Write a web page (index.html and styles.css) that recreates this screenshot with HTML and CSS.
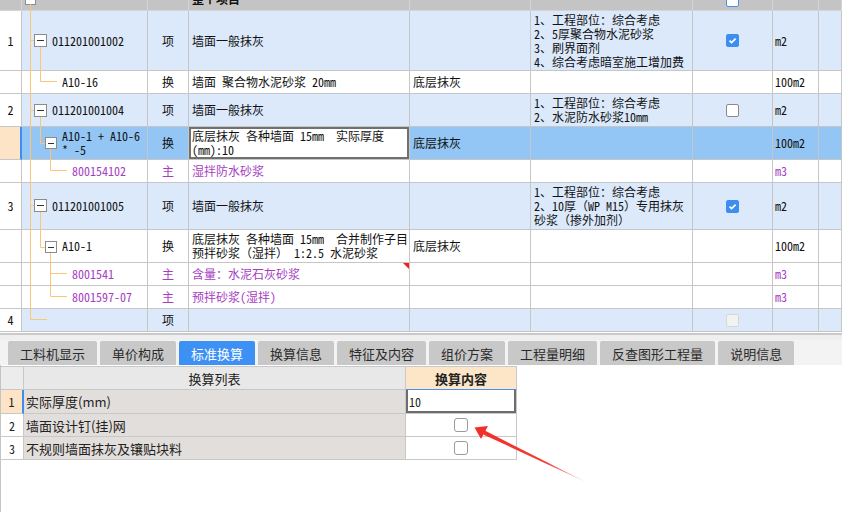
FILE: index.html
```html
<!DOCTYPE html>
<html lang="zh">
<head>
<meta charset="utf-8">
<title>标准换算</title>
<link rel="stylesheet" href="styles.css">
</head>
<body>
<div class="app">
  <div class="grid-view">
    <div class="grid-body">
      <div class="row head h24">
        <div class="cell num"></div>
        <div class="cell tree"><span class="hbox"></span></div>
        <div class="cell"></div>
        <div class="cell">整个项目</div>
        <div class="cell"></div>
        <div class="cell"></div>
        <div class="cell chk"><span class="cb hdr"></span></div>
        <div class="cell"></div>
        <div class="cell"></div>
      </div>

      <div class="row item h60">
        <div class="cell num">1</div>
        <div class="cell tree l1">011201001002</div>
        <div class="cell type">项</div>
        <div class="cell">墙面一般抹灰</div>
        <div class="cell"></div>
        <div class="cell desc">1、工程部位：综合考虑<br>2、5厚聚合物水泥砂浆<br>3、刷界面剂<br>4、综合考虑暗室施工增加费</div>
        <div class="cell chk"><span class="cb on"><svg viewBox="0 0 13 13"><path d="M3 6.6 L5.4 9 L10.2 4.2" fill="none" stroke="#fff" stroke-width="2"/></svg></span></div>
        <div class="cell unit">m2</div>
        <div class="cell"></div>
      </div>

      <div class="row sub h23">
        <div class="cell num"></div>
        <div class="cell tree l2">A10-16</div>
        <div class="cell type">换</div>
        <div class="cell">墙面 聚合物水泥砂浆 20mm</div>
        <div class="cell">底层抹灰</div>
        <div class="cell"></div>
        <div class="cell"></div>
        <div class="cell unit">100m2</div>
        <div class="cell"></div>
      </div>

      <div class="row item h33">
        <div class="cell num">2</div>
        <div class="cell tree l1">011201001004</div>
        <div class="cell type">项</div>
        <div class="cell">墙面一般抹灰</div>
        <div class="cell"></div>
        <div class="cell desc">1、工程部位：综合考虑<br>2、水泥防水砂浆10mm</div>
        <div class="cell chk"><span class="cb"></span></div>
        <div class="cell unit">m2</div>
        <div class="cell"></div>
      </div>

      <div class="row sel h33">
        <div class="cell num"></div>
        <div class="cell tree l2 desc">A10-1 + A10-6<br>* -5</div>
        <div class="cell type">换</div>
        <div class="cell edit">底层抹灰 各种墙面 15mm&nbsp;&nbsp;实际厚度<br>(mm):10</div>
        <div class="cell">底层抹灰</div>
        <div class="cell"></div>
        <div class="cell"></div>
        <div class="cell unit">100m2</div>
        <div class="cell"></div>
      </div>

      <div class="row sub mat h23">
        <div class="cell num"></div>
        <div class="cell tree l3">800154102</div>
        <div class="cell type">主</div>
        <div class="cell">湿拌防水砂浆</div>
        <div class="cell"></div>
        <div class="cell"></div>
        <div class="cell"></div>
        <div class="cell unit">m3</div>
        <div class="cell"></div>
      </div>

      <div class="row item h47">
        <div class="cell num">3</div>
        <div class="cell tree l1">011201001005</div>
        <div class="cell type">项</div>
        <div class="cell">墙面一般抹灰</div>
        <div class="cell"></div>
        <div class="cell desc">1、工程部位：综合考虑<br>2、10厚（WP M15）专用抹灰<br>砂浆（掺外加剂）</div>
        <div class="cell chk"><span class="cb on"><svg viewBox="0 0 13 13"><path d="M3 6.6 L5.4 9 L10.2 4.2" fill="none" stroke="#fff" stroke-width="2"/></svg></span></div>
        <div class="cell unit">m2</div>
        <div class="cell"></div>
      </div>

      <div class="row sub h33">
        <div class="cell num"></div>
        <div class="cell tree l2">A10-1</div>
        <div class="cell type">换</div>
        <div class="cell desc">底层抹灰 各种墙面 15mm&nbsp;&nbsp;合并制作子目<br>预拌砂浆（湿拌） 1:2.5 水泥砂浆</div>
        <div class="cell">底层抹灰</div>
        <div class="cell"></div>
        <div class="cell"></div>
        <div class="cell unit">100m2</div>
        <div class="cell"></div>
      </div>

      <div class="row sub mat h23">
        <div class="cell num"></div>
        <div class="cell tree l3">8001541</div>
        <div class="cell type">主</div>
        <div class="cell flag">含量：水泥石灰砂浆</div>
        <div class="cell"></div>
        <div class="cell"></div>
        <div class="cell"></div>
        <div class="cell unit">m3</div>
        <div class="cell"></div>
      </div>

      <div class="row sub mat h23">
        <div class="cell num"></div>
        <div class="cell tree l3">8001597-07</div>
        <div class="cell type">主</div>
        <div class="cell">预拌砂浆(湿拌)</div>
        <div class="cell"></div>
        <div class="cell"></div>
        <div class="cell"></div>
        <div class="cell unit">m3</div>
        <div class="cell"></div>
      </div>

      <div class="row item h23">
        <div class="cell num">4</div>
        <div class="cell tree l1"></div>
        <div class="cell type">项</div>
        <div class="cell"></div>
        <div class="cell"></div>
        <div class="cell"></div>
        <div class="cell chk"><span class="cb dis"></span></div>
        <div class="cell unit"></div>
        <div class="cell"></div>
      </div>
    </div>

    <svg class="tree-lines" width="842" height="332" viewBox="0 0 842 332">
      <g stroke="#fcc676" stroke-width="1" fill="none">
        <path d="M30.5 4 V319.5 H47"/>
        <path d="M30 40.5 H34"/>
        <path d="M30 110.5 H34"/>
        <path d="M30 205.5 H34"/>
        <path d="M40.5 47 V81.5 H57"/>
        <path d="M40.5 117 V143.5 H45"/>
        <path d="M50.5 149 V170.5 H67"/>
        <path d="M40.5 212 V247.5 H45"/>
        <path d="M50.5 253 V296.5 H67 M50 273.5 H67"/>
      </g>
      <g fill="#fff" stroke="#8c8c8c" stroke-width="1">
        <rect x="34.5" y="34.5" width="12" height="12"/>
        <rect x="34.5" y="104.5" width="12" height="12"/>
        <rect x="45.5" y="137.5" width="11" height="11"/>
        <rect x="34.5" y="199.5" width="12" height="12"/>
        <rect x="45.5" y="241.5" width="11" height="11"/>
      </g>
      <g stroke="#333" stroke-width="1">
        <path d="M37 40.5 H44"/>
        <path d="M37 110.5 H44"/>
        <path d="M48 143.5 H54"/>
        <path d="M37 205.5 H44"/>
        <path d="M48 247.5 H54"/>
      </g>
    </svg>
  </div>

  <div class="splitter"></div>

  <div class="tabs">
    <div class="tab">工料机显示</div>
    <div class="tab">单价构成</div>
    <div class="tab active">标准换算</div>
    <div class="tab">换算信息</div>
    <div class="tab">特征及内容</div>
    <div class="tab">组价方案</div>
    <div class="tab">工程量明细</div>
    <div class="tab">反查图形工程量</div>
    <div class="tab">说明信息</div>
  </div>

  <div class="bottom">
    <div class="calc">
      <div class="crow chead">
        <div class="ccell cnum"></div>
        <div class="ccell cname center">换算列表</div>
        <div class="ccell cval center bold">换算内容</div>
      </div>
      <div class="crow r24 cur">
        <div class="ccell cnum">1</div>
        <div class="ccell cname">实际厚度(mm)</div>
        <div class="ccell cval input">10</div>
      </div>
      <div class="crow">
        <div class="ccell cnum">2</div>
        <div class="ccell cname">墙面设计钉(挂)网</div>
        <div class="ccell cval center"><span class="cb lite"></span></div>
      </div>
      <div class="crow">
        <div class="ccell cnum">3</div>
        <div class="ccell cname">不规则墙面抹灰及镶贴块料</div>
        <div class="ccell cval center"><span class="cb lite"></span></div>
      </div>
    </div>
  </div>

  <svg class="arrow" width="842" height="512" viewBox="0 0 842 512">
    <defs>
      <linearGradient id="fade" gradientUnits="userSpaceOnUse" x1="484" y1="432" x2="590" y2="484">
        <stop offset="0" stop-color="#f2302a" stop-opacity="1"/>
        <stop offset="0.6" stop-color="#f2302a" stop-opacity="0.95"/>
        <stop offset="1" stop-color="#f2302a" stop-opacity="0"/>
      </linearGradient>
    </defs>
    <polygon points="483.2,434.4 484.8,430.6 590,484" fill="url(#fade)"/>
    <polygon points="474.5,427.5 488,426 481,439" fill="#f2302a"/>
  </svg>
</div>
</body>
</html>
```

FILE: styles.css
```css
* {
  box-sizing: border-box;
}

html, body {
  margin: 0;
  padding: 0;
}

body {
  width: 842px;
  height: 512px;
  overflow: hidden;
  background: #ffffff;
  font-family: "Noto Sans CJK SC", "Noto Sans", sans-serif;
}

.app {
  position: relative;
  width: 842px;
  height: 512px;
  overflow: hidden;
  display: flex;
  flex-direction: column;
}

/* ---------- upper grid ---------- */
.grid-view {
  position: relative;
  height: 332px;
  flex: none;
  overflow: hidden;
  font-family: "Noto Sans Mono CJK SC", "Noto Sans CJK SC", "DejaVu Sans Mono", monospace;
  font-size: 12px;
  line-height: 14px;
  color: #111111;
}

.grid-body {
  margin-top: -13px;
}

.row {
  display: grid;
  grid-template-columns: 22px 126px 41px 221px 121px 162px 80px 46px 1fr;
}

.h24 { height: 24px; }
.h60 { height: 60px; }
.h23 { height: 23px; }
.h33 { height: 33px; }
.h47 { height: 47px; }

.cell {
  position: relative;
  display: flex;
  align-items: center;
  padding: 0 3px;
  border-right: 1px solid #c6c6c6;
  border-bottom: 1px solid #c6c6c6;
  white-space: nowrap;
  overflow: hidden;
  background: #ffffff;
}

.row.head .cell {
  background: #c4c4c4;
  border-color: #d4d4d4;
  font-weight: bold;
}

.row.item .cell {
  background: #dce9fb;
}

.row.sel .cell {
  background: #93c6f4;
}

.row .cell.num {
  justify-content: center;
  padding: 0;
  background: #ffffff;
}

.row.head .cell.num {
  background: #c4c4c4;
}

.row.sel .cell.num {
  background: #fde4c6;
  border-right: 2px solid #3d8ef0;
}

.cell.type {
  justify-content: center;
  padding: 0;
}

.cell.tree.l1 { padding-left: 30px; }
.cell.tree.l2 { padding-left: 40px; }
.cell.tree.l3 { padding-left: 50px; }

.cell.unit {
  padding-left: 2px;
}

.row.mat .cell {
  color: #a63dc2;
}

.row .cell.edit {
  background: #ffffff;
  box-shadow: inset 0 0 0 2px #707070;
  align-items: flex-start;
  padding-top: 2px;
}

.cell.flag::after {
  content: "";
  position: absolute;
  top: 0;
  right: 0;
  border-top: 6px solid #ff1a1a;
  border-left: 6px solid transparent;
}

.cell.chk {
  justify-content: center;
}

.hbox {
  display: block;
  width: 11px;
  height: 11px;
  margin-top: 2px;
  border: 1px solid #8c8c8c;
  background: #ffffff;
}

/* checkboxes */
.cb {
  display: inline-block;
  width: 13px;
  height: 13px;
  border: 1px solid #8a8a8a;
  border-radius: 2px;
  background: #ffffff;
}

.cb svg {
  display: block;
  width: 11px;
  height: 11px;
}

.cb.on {
  background: #3d8ef0;
  border-color: #3d8ef0;
}

.cb.dis {
  background: #f2f2f2;
  border-color: #d6d6d6;
}

.cb.hdr {
  border-color: #4a90e6;
  margin-top: 4px;
}

.cb.lite {
  width: 14px;
  height: 14px;
  border-color: #9a9a9a;
  border-radius: 3px;
}

/* ---------- splitter + tabs ---------- */
.splitter {
  height: 8px;
  flex: none;
  margin-top: 1px;
  border-top: 2px solid #c9c9c9;
  background: #efefef;
}

.tabs {
  display: flex;
  gap: 3px;
  height: 25px;
  flex: none;
  padding: 0 0 0 8px;
  background: #f3f3f3;
  margin-top: -1px;
}

.tab {
  height: 24px;
  margin-top: 1px;
  padding: 0 12px;
  display: flex;
  align-items: center;
  justify-content: center;
  font-size: 13px;
  color: #2b2b2b;
  background: #c8c8c8;
  border-radius: 2px 2px 0 0;
}

.tab.active {
  background: #3d91f4;
  color: #ffffff;
}

/* ---------- bottom table ---------- */
.bottom {
  flex: 1;
  background: #ffffff;
  border-left: 1px solid #c4c4c4;
  padding-top: 1px;
}

.calc {
  width: 516px;
  border-top: 1px solid #c8c8c8;
  font-size: 13px;
  color: #222222;
}

.crow {
  display: grid;
  grid-template-columns: 23px 382px 111px;
  height: 23px;
}

.crow.r24 {
  height: 24px;
}

.ccell {
  display: flex;
  align-items: center;
  padding: 0 2px;
  border-right: 1px solid #c8c8c8;
  border-bottom: 1px solid #c8c8c8;
  white-space: nowrap;
  background: #ffffff;
}

.ccell.cnum {
  justify-content: center;
  padding: 0;
  font-family: "Noto Sans Mono CJK SC", "DejaVu Sans Mono", monospace;
  font-size: 12px;
}

.ccell.cname {
  background: #e2dedb;
}

.chead .ccell.cnum {
  background: #ececec;
}

.chead .ccell.cname {
  background: #e8e8e8;
}

.chead .ccell.cval {
  background: #fde6c8;
}

.center {
  justify-content: center;
}

.bold {
  font-weight: bold;
}

.crow.cur .ccell.cnum {
  background: #fde4c6;
  border-right: 2px solid #3d8ef0;
}

.ccell.input {
  background: #ffffff;
  border-top: 1px solid #4a90e6;
  box-shadow: inset 2px 0 0 #6d6d6d, inset -2px 0 0 #6d6d6d, inset 0 -2px 0 #6d6d6d;
  padding-left: 3px;
  margin-top: -1px;
  font-family: "Noto Sans Mono CJK SC", "DejaVu Sans Mono", monospace;
  font-size: 12px;
}

/* ---------- overlays ---------- */
.tree-lines {
  position: absolute;
  left: 0;
  top: 0;
  pointer-events: none;
}

.arrow {
  position: absolute;
  left: 0;
  top: 0;
  pointer-events: none;
}
```
